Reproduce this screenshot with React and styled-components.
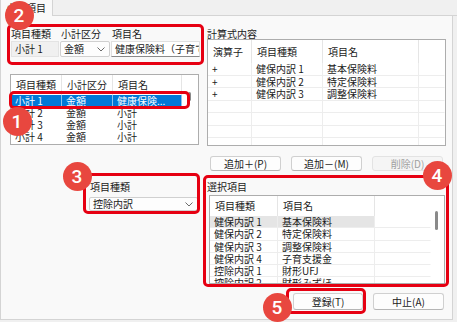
import styled, { createGlobalStyle } from "styled-components";

const GlobalStyle = createGlobalStyle`
  html, body { margin: 0; padding: 0; }
  body {
    background: #f0f0f0;
    font-family: "Noto Sans CJK JP", "Noto Sans", sans-serif;
    font-size: 10px;
    color: #1a1a1a;
  }
`;

const subtotalList = {
  columns: ["51px", "51px", "69px", "1fr"],
  headers: ["項目種類", "小計区分", "項目名", ""],
  rows: [
    ["小計 1", "金額", "健康保険...", ""],
    ["小計 2", "金額", "小計", ""],
    ["小計 3", "金額", "小計", ""],
    ["小計 4", "金額", "小計", ""],
  ],
};

const formulaList = {
  columns: ["44px", "71px", "96px", "1fr"],
  headers: ["演算子", "項目種類", "項目名", ""],
  rows: [
    ["+", "健保内訳 1", "基本保険料", ""],
    ["+", "健保内訳 2", "特定保険料", ""],
    ["+", "健保内訳 3", "調整保険料", ""],
    ["", "", "", ""],
    ["", "", "", ""],
    ["", "", "", ""],
    ["", "", "", ""],
  ],
};

const choiceList = {
  columns: ["68px", "97px", "1fr"],
  headers: ["項目種類", "項目名", ""],
  rows: [
    ["健保内訳 1", "基本保険料", ""],
    ["健保内訳 2", "特定保険料", ""],
    ["健保内訳 3", "調整保険料", ""],
    ["健保内訳 4", "子育支援金", ""],
    ["控除内訳 1", "財形UFJ", ""],
    ["控除内訳 2", "財形みずほ", ""],
  ],
};

const frames = [
  { x: 7, y: 24, w: 197, h: 41 },
  { x: 9, y: 91, w: 181, h: 18 },
  { x: 83, y: 173, w: 117, h: 41 },
  { x: 203, y: 175, w: 246, h: 112 },
  { x: 286, y: 288, w: 80, h: 26 },
];

const badges = [
  { n: 1, x: 17, y: 121 },
  { n: 2, x: 19, y: 15 },
  { n: 3, x: 77, y: 176 },
  { n: 4, x: 437, y: 175 },
  { n: 5, x: 277, y: 307 },
];

export default function App() {
  return (
    <>
      <GlobalStyle />
      <Window>
        <TabStrip>
          <Tab>小計項目</Tab>
          <TabFiller />
        </TabStrip>
        <Panel>
          <TopRow>
            <LeftCol>
              <FieldGrid>
                <FieldLabel>項目種類</FieldLabel>
                <FieldLabel>小計区分</FieldLabel>
                <FieldLabel>項目名</FieldLabel>
                <ReadOnlyField>小計 1</ReadOnlyField>
                <Select $w={50}>
                  金額
                  <Chevron />
                </Select>
                <TextField>健康保険料（子育て支援金）</TextField>
              </FieldGrid>
              <ListView
                {...subtotalList}
                width={189}
                height={71}
                top={17}
                headerHeight={20}
                rowHeight={12}
                selected={0}
                grid={false}
                scroll={{ track: 15, top: 17, size: 9, left: 5 }}
              />
            </LeftCol>
            <RightCol>
              <GroupLabel>計算式内容</GroupLabel>
              <ListView
                {...formulaList}
                width={239}
                height={107}
                headerHeight={23}
                rowHeight={12.5}
                grid
              />
            </RightCol>
          </TopRow>

          <ButtonRow $indent={200}>
            <Button $w={71}>追加＋(P)</Button>
            <Button $w={71}>追加－(M)</Button>
            <Button $w={71} disabled>
              削除(D)
            </Button>
          </ButtonRow>

          <BottomRow>
            <KindCol>
              <FieldLabel>項目種類</FieldLabel>
              <Select $w={109} $top={4}>
                控除内訳
                <Chevron />
              </Select>
            </KindCol>
            <RightCol>
              <GroupLabel>選択項目</GroupLabel>
              <ListView
                {...choiceList}
                width={236}
                height={89}
                top={3}
                left={2}
                headerHeight={20}
                rowHeight={12.3}
                hovered={0}
                grid
                scroll={{ track: 13, top: 15, size: 19, left: 4 }}
              />
            </RightCol>
          </BottomRow>

          <FooterRow>
            <Button $w={70} $h={17}>
              登録(T)
            </Button>
            <Button $w={71} $h={17}>
              中止(A)
            </Button>
          </FooterRow>
        </Panel>

        {frames.map((f, i) => (
          <RedFrame key={i} $x={f.x} $y={f.y} $w={f.w} $h={f.h} />
        ))}
        {badges.map((b) => (
          <Badge key={b.n} $x={b.x} $y={b.y}>
            {b.n}
          </Badge>
        ))}
      </Window>
    </>
  );
}

function ListView({
  columns,
  headers,
  rows,
  width,
  height,
  top = 0,
  left = 0,
  headerHeight,
  rowHeight,
  selected,
  hovered,
  grid,
  scroll,
}) {
  const template = columns.join(" ");
  const last = columns.length - 1;

  return (
    <ListBox $w={width} $h={height} $top={top} $left={left}>
      <ListBody>
        <GridRow $template={template} $h={headerHeight}>
          {headers.map((h, i) => (
            <HeaderCell key={i} $sep={i < last}>
              {h}
            </HeaderCell>
          ))}
        </GridRow>
        {rows.map((row, r) => {
          const state =
            r === selected ? "selected" : r === hovered ? "hover" : "plain";
          return (
            <GridRow key={r} $template={template} $h={rowHeight}>
              {row.map((c, i) => (
                <Cell
                  key={i}
                  $state={i < last ? state : "plain"}
                  $grid={grid}
                  $sep={i < last}
                >
                  {c}
                </Cell>
              ))}
            </GridRow>
          );
        })}
      </ListBody>
      {scroll && (
        <ScrollTrack $w={scroll.track} $top={scroll.top} $left={scroll.left}>
          <Thumb $h={scroll.size} />
        </ScrollTrack>
      )}
    </ListBox>
  );
}

function Chevron() {
  return (
    <ChevronSvg viewBox="0 0 8 5" width="8" height="5">
      <polyline
        points="0.5,0.5 4,4 7.5,0.5"
        fill="none"
        stroke="#6b6b6b"
        strokeWidth="1"
      />
    </ChevronSvg>
  );
}

const Window = styled.div`
  position: relative;
  width: 457px;
  height: 322px;
  overflow: hidden;
  background: #f0f0f0;
`;

const TabStrip = styled.div`
  display: flex;
  height: 16px;
`;

const Tab = styled.div`
  box-sizing: border-box;
  width: 53px;
  padding-left: 5px;
  line-height: 16px;
  background: #f9f9f9;
  border-right: 1px solid #d4d4d4;
  border-left: 1px solid #d4d4d4;
`;

const TabFiller = styled.div`
  flex: 1;
  border-bottom: 1px solid #d4d4d4;
`;

const Panel = styled.div`
  box-sizing: border-box;
  width: 453px;
  height: 304px;
  padding: 12px 0 0 9px;
  background: #f9f9f9;
  border: 1px solid #d4d4d4;
  border-top: none;
`;

const TopRow = styled.div`
  display: flex;
  gap: 7px;
  align-items: flex-start;
`;

const LeftCol = styled.div`
  width: 190px;
  display: flex;
  flex-direction: column;
`;

const RightCol = styled.div`
  width: 239px;
  display: flex;
  flex-direction: column;
`;

const FieldGrid = styled.div`
  display: grid;
  grid-template-columns: 50px 51px 89px;
  grid-template-rows: 13px 16px;
`;

const FieldLabel = styled.div`
  padding-left: 1px;
  line-height: 12px;
  white-space: nowrap;
`;

const GroupLabel = styled.div`
  line-height: 11px;
  white-space: nowrap;
`;

const fieldBase = `
  box-sizing: border-box;
  height: 16px;
  line-height: 14px;
  padding: 0 3px;
  white-space: nowrap;
  overflow: hidden;
`;

const ReadOnlyField = styled.div`
  ${fieldBase}
  margin-left: 1px;
  width: 48px;
  background: #f0f0f0;
  border: 1px solid #e3e3e3;
`;

const TextField = styled.div`
  ${fieldBase}
  background: #ffffff;
  border: 1px solid #e0e0e0;
  border-bottom-color: #8a8a8a;
`;

const Select = styled.div`
  ${fieldBase}
  width: ${(p) => p.$w}px;
  height: ${(p) => (p.$top ? 14 : 16)}px;
  line-height: ${(p) => (p.$top ? 12 : 14)}px;
  margin-top: ${(p) => p.$top || 0}px;
  display: flex;
  align-items: center;
  justify-content: space-between;
  background: #fdfdfd;
  border: 1px solid #d0d0d0;
  border-radius: 2px;
`;

const ChevronSvg = styled.svg`
  flex: none;
  margin-right: 1px;
`;

const ListBox = styled.div`
  box-sizing: border-box;
  width: ${(p) => p.$w}px;
  height: ${(p) => p.$h}px;
  margin-top: ${(p) => p.$top}px;
  margin-left: ${(p) => p.$left}px;
  display: flex;
  overflow: hidden;
  background: #ffffff;
  border: 1px solid #adadad;
`;

const ListBody = styled.div`
  flex: 1;
  min-width: 0;
`;

const GridRow = styled.div`
  display: grid;
  grid-template-columns: ${(p) => p.$template};
  height: ${(p) => p.$h}px;
  line-height: ${(p) => p.$h}px;
`;

const HeaderCell = styled.div`
  padding-left: 5px;
  white-space: nowrap;
  overflow: hidden;
  border-right: 1px solid ${(p) => (p.$sep ? "#e5e5e5" : "transparent")};
`;

const cellColors = {
  plain: { bg: "transparent", fg: "#1a1a1a" },
  hover: { bg: "#e5e5e5", fg: "#1a1a1a" },
  selected: { bg: "#0078d7", fg: "#ffffff" },
};

const Cell = styled.div`
  box-sizing: border-box;
  padding-left: 4px;
  white-space: nowrap;
  overflow: hidden;
  background: ${(p) => cellColors[p.$state].bg};
  color: ${(p) => cellColors[p.$state].fg};
  border-right: 1px solid
    ${(p) =>
      p.$state === "selected"
        ? "rgba(255,255,255,0.55)"
        : p.$grid && p.$sep
        ? "#ededed"
        : "transparent"};
  border-bottom: 1px solid ${(p) => (p.$grid ? "#ededed" : "transparent")};
`;

const ScrollTrack = styled.div`
  box-sizing: border-box;
  width: ${(p) => p.$w}px;
  padding: ${(p) => p.$top}px 0 0 ${(p) => p.$left}px;
`;

const Thumb = styled.div`
  width: 3px;
  height: ${(p) => p.$h}px;
  border-radius: 2px;
  background: #8a8a8a;
`;

const ButtonRow = styled.div`
  display: flex;
  gap: 10px;
  margin-top: 10px;
  padding-left: ${(p) => p.$indent}px;
`;

const Button = styled.button`
  box-sizing: border-box;
  width: ${(p) => p.$w}px;
  height: ${(p) => p.$h || 15}px;
  padding: 0;
  font-family: inherit;
  font-size: 10px;
  line-height: 1;
  color: #1a1a1a;
  background: #fdfdfd;
  border: 1px solid #d0d0d0;
  border-bottom-color: #b5b5b5;
  border-radius: 3px;

  &:disabled {
    color: #a0a0a0;
    background: #f5f5f5;
    border-color: #e3e3e3;
  }
`;

const BottomRow = styled.div`
  display: flex;
  gap: 7px;
  margin-top: 10px;
`;

const KindCol = styled.div`
  width: 190px;
  box-sizing: border-box;
  padding: 0 0 0 79px;
  display: flex;
  flex-direction: column;
`;

const FooterRow = styled.div`
  display: flex;
  gap: 10px;
  margin-top: 9px;
  padding-left: 283px;
`;

const RedFrame = styled.div`
  position: absolute;
  box-sizing: border-box;
  left: ${(p) => p.$x}px;
  top: ${(p) => p.$y}px;
  width: ${(p) => p.$w}px;
  height: ${(p) => p.$h}px;
  border: 3px solid #e60012;
  border-radius: 5px;
  pointer-events: none;
`;

const Badge = styled.div`
  position: absolute;
  left: ${(p) => p.$x - 14.5}px;
  top: ${(p) => p.$y - 14.5}px;
  width: 29px;
  height: 29px;
  border-radius: 50%;
  background: #e8473f;
  color: #ffffff;
  display: flex;
  align-items: center;
  justify-content: center;
  font-family: Roboto, "Liberation Sans", sans-serif;
  font-size: 19px;
  font-weight: 500;
`;
